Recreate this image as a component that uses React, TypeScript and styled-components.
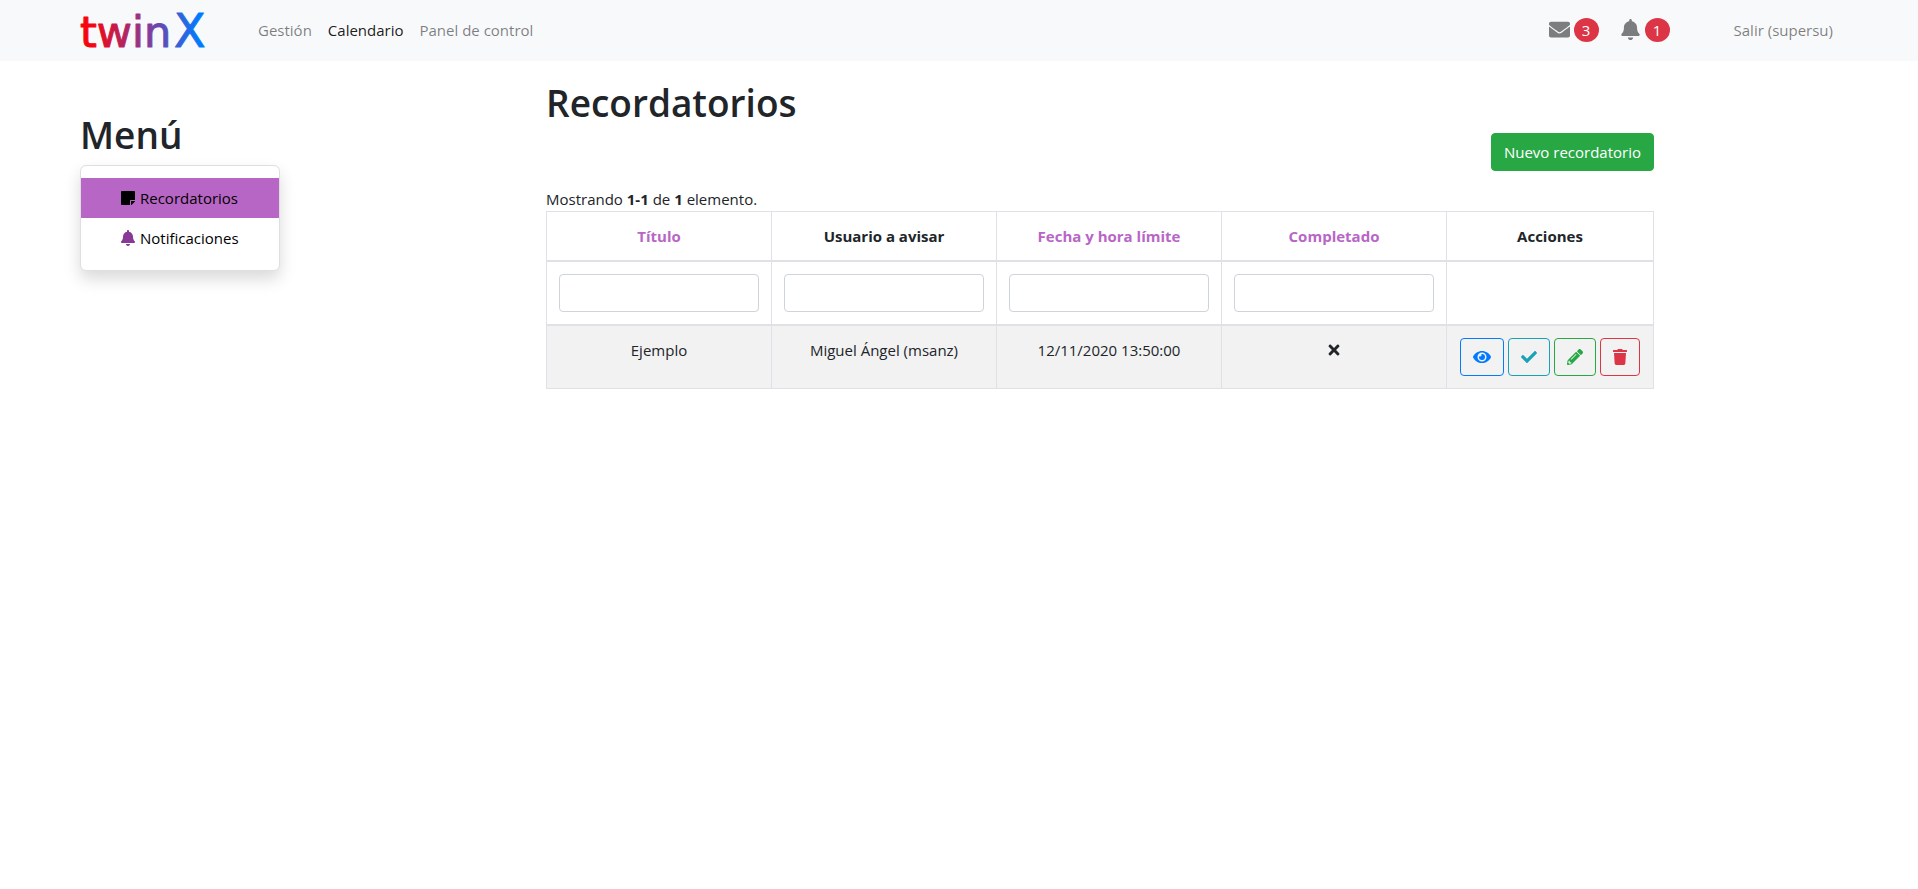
import React from 'react';
import styled, { createGlobalStyle, css } from 'styled-components';
import {
  FaBell,
  FaCheck,
  FaEnvelope,
  FaEye,
  FaPencilAlt,
  FaStickyNote,
  FaTimes,
  FaTrash,
} from 'react-icons/fa';

const GlobalStyle = createGlobalStyle`
  *, *::before, *::after { box-sizing: border-box; }
  body {
    margin: 0;
    background: #fff;
    color: #212529;
    font: 400 15px/24px "Segoe UI", "Open Sans", "Noto Sans", sans-serif;
  }
  a { text-decoration: none; }
`;

const Navbar = styled.header`
  display: flex;
  align-items: center;
  min-height: 61px;
  padding: 0 77px 2px 80px;
  background: #f8f9fb;
`;

const Brand = styled.a`
  display: block;
  height: 40px;
  margin-right: 46px;
`;

const LogoDrawing = styled.svg`
  display: block;
  overflow: visible;
  font-family: "DejaVu Sans", sans-serif;
`;

const NavLinks = styled.nav`
  display: flex;
`;

const NavLink = styled.a<{ $active?: boolean }>`
  padding: 8px;
  color: ${(p) => (p.$active ? 'rgba(0, 0, 0, 0.9)' : 'rgba(0, 0, 0, 0.5)')};
`;

const NavTools = styled.div`
  display: flex;
  align-items: center;
  gap: 21px;
  margin-left: auto;
`;

const Alert = styled.a`
  display: flex;
  align-items: center;
  gap: 4px;
  color: #7c7d7e;
`;

const Badge = styled.span`
  width: 25px;
  height: 24px;
  border-radius: 50%;
  background: #dc3545;
  color: #fff;
  text-align: center;
`;

const Logout = styled(NavLink)`
  margin-left: 35px;
`;

const Layout = styled.div`
  display: grid;
  grid-template-columns: 200px minmax(0, 1fr);
  gap: 266px;
  padding: 16px 264px 0 80px;
`;

const Sidebar = styled.aside`
  padding-top: 32px;
`;

const Heading = styled.h1`
  margin: 0 0 4px;
  font-size: 37px;
  font-weight: 600;
  line-height: 52px;
`;

const MenuCard = styled.nav`
  padding: 12px 0;
  border: 1px solid #dfdfdf;
  border-radius: 6px;
  background: #fff;
  box-shadow: 0 8px 16px rgba(0, 0, 0, 0.15);
`;

const MenuItem = styled.a<{ $active?: boolean }>`
  display: flex;
  align-items: center;
  gap: 4px;
  padding: 8px 39px;
  color: #000;
  background: ${(p) => (p.$active ? '#b866c6' : 'transparent')};

  svg {
    color: ${(p) => (p.$active ? '#000' : '#883997')};
  }
`;

const Toolbar = styled.div`
  display: flex;
  justify-content: flex-end;
  margin-bottom: 16px;
`;

const buttonBase = css`
  display: inline-flex;
  align-items: center;
  justify-content: center;
  height: 38px;
  padding: 0 12px;
  border: 1px solid;
  border-radius: 4px;
  font: inherit;
  cursor: pointer;
`;

const PrimaryButton = styled.button`
  ${buttonBase}
  border-color: #28a745;
  background: #28a745;
  color: #fff;
`;

const IconButton = styled.button<{ $color: string; $iconWidth: number }>`
  ${buttonBase}
  border-color: ${(p) => p.$color};
  background: transparent;
  color: ${(p) => p.$color};

  svg {
    width: ${(p) => p.$iconWidth}px;
    height: 16px;
  }
`;

const Actions = styled.div`
  display: flex;
  justify-content: center;
  gap: 4px;
`;

const Table = styled.table`
  width: 100%;
  table-layout: fixed;
  border-collapse: collapse;
  text-align: center;

  th,
  td {
    padding: 12px;
    border: 1px solid #dee2e6;
    vertical-align: top;
  }

  thead th,
  thead td {
    border-bottom-width: 2px;
  }

  tbody tr {
    background: #f2f2f2;
  }
`;

const ActionsCol = styled.col`
  width: 207px;
`;

const SortLink = styled.a`
  color: #b866c6;
`;

const FilterInput = styled.input`
  display: block;
  width: 100%;
  height: 38px;
  padding: 6px 12px;
  border: 1px solid #ced4da;
  border-radius: 4px;
  background: #fff;
  font: inherit;
`;

const StateIcon = styled.span`
  display: flex;
  align-items: center;
  justify-content: center;
  height: 24px;
`;

const columns = [
  { label: 'Título', sortable: true },
  { label: 'Usuario a avisar', sortable: false },
  { label: 'Fecha y hora límite', sortable: true },
  { label: 'Completado', sortable: true },
];

const actions = [
  { label: 'Ver', color: '#007bff', Icon: FaEye, width: 18 },
  { label: 'Completar', color: '#17a2b8', Icon: FaCheck, width: 16 },
  { label: 'Editar', color: '#28a745', Icon: FaPencilAlt, width: 16 },
  { label: 'Eliminar', color: '#dc3545', Icon: FaTrash, width: 14 },
];

function Logo() {
  return (
    <LogoDrawing width="124" height="40" viewBox="0 0 124 40" role="img" aria-label="twinX">
      <defs>
        <linearGradient id="brand" gradientUnits="userSpaceOnUse" x1="12" y1="0" x2="120" y2="0">
          <stop offset="0" stopColor="#f5050f" />
          <stop offset="0.5" stopColor="#883997" />
          <stop offset="1" stopColor="#007bff" />
        </linearGradient>
      </defs>
      <g fill="url(#brand)" stroke="url(#brand)" strokeWidth="1" strokeLinejoin="round">
        <text x="0" y="37" fontSize="43">
          twin
        </text>
        <text x="94" y="37" fontSize="46">
          X
        </text>
      </g>
    </LogoDrawing>
  );
}

export default function App() {
  return (
    <>
      <GlobalStyle />
      <Navbar>
        <Brand href="#">
          <Logo />
        </Brand>
        <NavLinks>
          <NavLink href="#">Gestión</NavLink>
          <NavLink href="#" $active>
            Calendario
          </NavLink>
          <NavLink href="#">Panel de control</NavLink>
        </NavLinks>
        <NavTools>
          <Alert href="#">
            <FaEnvelope size={21} />
            <Badge>3</Badge>
          </Alert>
          <Alert href="#">
            <FaBell size={21} />
            <Badge>1</Badge>
          </Alert>
          <Logout href="#">Salir (supersu)</Logout>
        </NavTools>
      </Navbar>
      <Layout>
        <Sidebar>
          <Heading as="h2">Menú</Heading>
          <MenuCard>
            <MenuItem href="#" $active>
              <FaStickyNote size={16} />
              Recordatorios
            </MenuItem>
            <MenuItem href="#">
              <FaBell size={16} />
              Notificaciones
            </MenuItem>
          </MenuCard>
        </Sidebar>
        <main>
          <Heading>Recordatorios</Heading>
          <Toolbar>
            <PrimaryButton type="button">Nuevo recordatorio</PrimaryButton>
          </Toolbar>
          <div>
            Mostrando <b>1-1</b> de <b>1</b> elemento.
          </div>
          <Table>
            <colgroup>
              <col span={4} />
              <ActionsCol />
            </colgroup>
            <thead>
              <tr>
                {columns.map((c) => (
                  <th key={c.label} scope="col">
                    {c.sortable ? <SortLink href="#">{c.label}</SortLink> : c.label}
                  </th>
                ))}
                <th scope="col">Acciones</th>
              </tr>
              <tr>
                {columns.map((c) => (
                  <td key={c.label}>
                    <FilterInput type="text" aria-label={c.label} />
                  </td>
                ))}
                <td />
              </tr>
            </thead>
            <tbody>
              <tr>
                <td>Ejemplo</td>
                <td>Miguel Ángel (msanz)</td>
                <td>12/11/2020 13:50:00</td>
                <td>
                  <StateIcon>
                    <FaTimes size={16} />
                  </StateIcon>
                </td>
                <td>
                  <Actions>
                    {actions.map(({ label, color, Icon, width }) => (
                      <IconButton
                        key={label}
                        type="button"
                        $color={color}
                        $iconWidth={width}
                        aria-label={label}
                      >
                        <Icon />
                      </IconButton>
                    ))}
                  </Actions>
                </td>
              </tr>
            </tbody>
          </Table>
        </main>
      </Layout>
    </>
  );
}
